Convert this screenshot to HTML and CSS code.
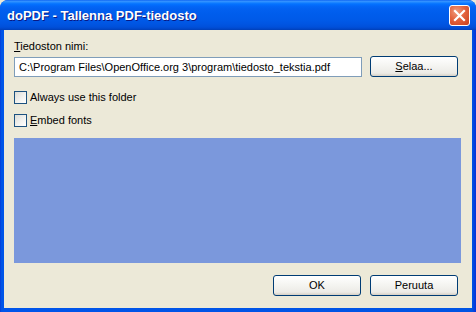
FILE: index.html
```html
<!DOCTYPE html>
<html>
<head>
<meta charset="utf-8">
<link rel="stylesheet" href="styles.css">
</head>
<body>
<div class="window">
  <div class="titlebar">
    <span class="title">doPDF - Tallenna PDF-tiedosto</span>
    <div class="close">
      <svg width="13" height="13" viewBox="0 0 13 13"><path d="M2 2 L11 11 M11 2 L2 11" stroke="#fff" stroke-width="2.2" stroke-linecap="square"/></svg>
    </div>
  </div>
  <div class="client">
    <div class="label"><u>T</u>iedoston nimi:</div>
    <div class="filerow">
      <div class="input">C:\Program Files\OpenOffice.org 3\program\tiedosto_tekstia.pdf</div>
      <div class="btn browse"><u>S</u>elaa...</div>
    </div>
    <div class="check first"><span class="box"></span><span>Always use this folder</span></div>
    <div class="check second"><span class="box"></span><span><u>E</u>mbed fonts</span></div>
    <div class="panel"></div>
    <div class="actions">
      <div class="btn">OK</div>
      <div class="btn">Peruuta</div>
    </div>
  </div>
</div>
</body>
</html>
```
FILE: styles.css
```css
html, body { margin: 0; padding: 0; }
body { width: 476px; height: 312px; overflow: hidden; background: #ECE9D8; font-family: "Liberation Sans", Arial, sans-serif; font-size: 11px; color: #000; }
.window { width: 476px; height: 312px; display: flex; flex-direction: column; background: linear-gradient(to right, #0831D9 0px, #0054E3 1px, #0055EA 3px, #0054E3 472px, #0831D9 476px); border-radius: 8px 8px 0 0; overflow: hidden; }
.titlebar { height: 30px; flex: none; display: flex; align-items: center; justify-content: space-between; padding: 0 6px 0 7px; box-sizing: border-box;
  background: linear-gradient(to bottom, #0058EE 0px, #3A93FF 1px, #288EFF 2px, #127DFF 3px, #0472FF 4px, #0367F8 6px, #0260F0 9px, #005DEC 14px, #005AE8 20px, #0055E2 24px, #0050DA 27px, #0046C8 29px, #003FB5 30px); }
.title { color: #fff; font-family: "Liberation Sans", Arial, sans-serif; font-weight: bold; font-size: 13px; text-shadow: 1px 1px 0 #0A1883; padding-top: 1px; }
.close { width: 21px; height: 21px; box-sizing: border-box; border: 1px solid #fff; border-radius: 3px; background: radial-gradient(circle at 35% 30%, #F09C7E 0%, #E3633E 45%, #C8401C 100%); display: flex; align-items: center; justify-content: center; margin-top: 1px; }
.close svg { display: block; }
.client { flex: 1; margin: 0 4px 4px 4px; background: #ECE9D8; padding: 10px 0 0 10px; display: flex; flex-direction: column; align-items: flex-start; }
.label { height: 13px; line-height: 13px; }
.filerow { display: flex; align-items: flex-start; margin-top: 3px; }
.input { width: 348px; height: 20px; box-sizing: border-box; border: 1px solid #7F9DB9; background: #fff; padding: 0 0 0 4px; line-height: 18px; white-space: nowrap; overflow: hidden; margin-top: 1px; }
.btn { width: 88px; height: 21px; box-sizing: border-box; border: 1px solid #003C74; border-radius: 3px; background: linear-gradient(to bottom, #FFFFFF 0%, #F6F6F3 40%, #ECEBE6 85%, #D6D0C5 100%); display: flex; align-items: center; justify-content: center; line-height: 13px; }
.browse { margin-left: 8px; }
.check { display: flex; align-items: center; height: 13px; line-height: 13px; }
.check.first { margin-top: 14px; }
.check.second { margin-top: 10px; }
.box { width: 13px; height: 13px; box-sizing: border-box; border: 1px solid #1C5180; background: linear-gradient(135deg, #DCDCD7 0%, #F3F3F1 60%, #FFFFFF 100%); margin-right: 3px; flex: none; }
.panel { width: 447px; height: 125px; background: #7B98DC; margin-top: 11px; }
.actions { display: flex; gap: 9px; margin-top: 12px; margin-left: 259px; }
```
